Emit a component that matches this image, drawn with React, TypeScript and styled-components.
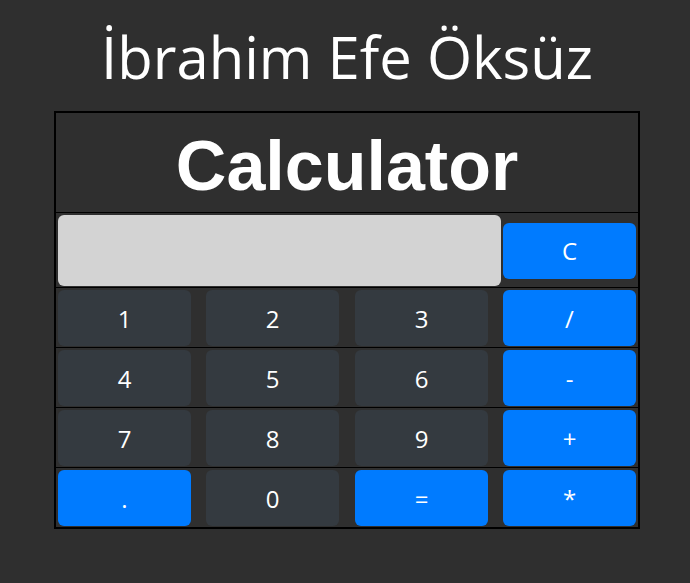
import React from 'react';
import styled, { createGlobalStyle } from 'styled-components';

type Kind = 'num' | 'op';

interface Key {
  label: string;
  kind: Kind;
}

const rows: Key[][] = [
  [
    { label: '1', kind: 'num' },
    { label: '2', kind: 'num' },
    { label: '3', kind: 'num' },
    { label: '/', kind: 'op' },
  ],
  [
    { label: '4', kind: 'num' },
    { label: '5', kind: 'num' },
    { label: '6', kind: 'num' },
    { label: '-', kind: 'op' },
  ],
  [
    { label: '7', kind: 'num' },
    { label: '8', kind: 'num' },
    { label: '9', kind: 'num' },
    { label: '+', kind: 'op' },
  ],
  [
    { label: '.', kind: 'op' },
    { label: '0', kind: 'num' },
    { label: '=', kind: 'op' },
    { label: '*', kind: 'op' },
  ],
];

const App = (): JSX.Element => {
  return (
    <>
      <GlobalStyle />
      <Page>
        <Owner>İbrahim Efe Öksüz</Owner>
        <Calc>
          <Header>Calculator</Header>
          <Row>
            <DisplayCell>
              <Display type="text" readOnly value="" />
            </DisplayCell>
            <KeyCell center>
              <KeyButton kind="op">C</KeyButton>
            </KeyCell>
          </Row>
          {rows.map((row, i) => (
            <Row key={i}>
              {row.map((k) => (
                <KeyCell key={k.label}>
                  <KeyButton kind={k.kind}>{k.label}</KeyButton>
                </KeyCell>
              ))}
            </Row>
          ))}
        </Calc>
      </Page>
    </>
  );
};

export default App;

const GlobalStyle = createGlobalStyle`
  html, body {
    margin: 0;
    padding: 0;
    background: #2f2f2f;
  }
  body {
    font-family: 'Open Sans', 'Noto Sans', sans-serif;
    color: #fff;
  }
`;

const Page = styled.div`
  width: 586px;
  margin-left: 54px;
  padding-top: 17px;
`;

const Owner = styled.h1`
  margin: 0 0 14px;
  text-align: center;
  font-family: 'Open Sans', sans-serif;
  font-weight: 500;
  font-size: 58px;
  line-height: 80px;
  white-space: nowrap;
  color: #fff;
`;

const Calc = styled.div`
  border: 2px solid #000;
  display: grid;
  grid-template-columns: 148px 149px 148px 137px;
`;

const Header = styled.div`
  grid-column: 1 / -1;
  height: 99px;
  display: flex;
  align-items: center;
  justify-content: center;
  font-family: 'Liberation Sans', Arial, sans-serif;
  font-weight: 700;
  font-size: 70px;
  color: #fff;
  padding-top: 6px;
  box-sizing: border-box;
`;

const Row = styled.div`
  grid-column: 1 / -1;
  display: grid;
  grid-template-columns: subgrid;
  border-top: 1px solid #000;
`;

const DisplayCell = styled.div`
  grid-column: 1 / 4;
  padding: 2px 0 1px 2px;
`;

const Display = styled.input`
  display: block;
  width: 100%;
  height: 71px;
  box-sizing: border-box;
  border: none;
  border-radius: 6px;
  background: #d3d3d3;
  outline: none;
`;

const KeyCell = styled.div<{ center?: boolean }>`
  display: flex;
  align-items: ${(p) => (p.center ? 'center' : 'flex-start')};
  padding: 2px 2px 1px;
`;

const KeyButton = styled.button<{ kind: Kind }>`
  width: 133px;
  height: 56px;
  border: none;
  border-radius: 6px;
  background: ${(p) => (p.kind === 'op' ? '#007bff' : '#343a40')};
  color: #fff;
  font-family: 'Open Sans', sans-serif;
  font-size: 24px;
  padding: 0;
  cursor: pointer;
`;
